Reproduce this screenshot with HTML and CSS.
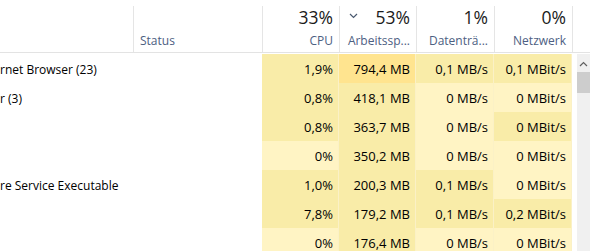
FILE: index.html
```html
<!DOCTYPE html>
<html lang="de">
<head>
<meta charset="utf-8">
<link rel="stylesheet" href="styles.css">
</head>
<body>
<div class="tm">
  <div class="grid">
    <div class="head">
      <div class="hc name"></div>
      <div class="hc status"><span class="lbl">Status</span></div>
      <div class="hc num"><span class="pct">33%</span><span class="lbl">CPU</span></div>
      <div class="hc num sorted">
        <svg class="chev" width="9" height="6" viewBox="0 0 9 6"><polyline points="1,1 4.5,4.5 8,1" fill="none" stroke="#4a5a70" stroke-width="1.2"/></svg>
        <span class="pct">53%</span><span class="lbl">Arbeitssp...</span></div>
      <div class="hc num"><span class="pct">1%</span><span class="lbl">Datenträ...</span></div>
      <div class="hc num"><span class="pct">0%</span><span class="lbl">Netzwerk</span></div>
      <div class="hc rest"></div>
    </div>
    <div class="body">
      <div class="rows">
        <div class="row"><div class="c name">rnet Browser (23)</div><div class="c"></div><div class="c v h1">1,9%</div><div class="c v h2">794,4 MB</div><div class="c v h1">0,1 MB/s</div><div class="c v h1">0,1 MBit/s</div></div>
        <div class="row"><div class="c name">r (3)</div><div class="c"></div><div class="c v h1">0,8%</div><div class="c v h1">418,1 MB</div><div class="c v h0">0 MB/s</div><div class="c v h0">0 MBit/s</div></div>
        <div class="row"><div class="c name"></div><div class="c"></div><div class="c v h1">0,8%</div><div class="c v h1">363,7 MB</div><div class="c v h0">0 MB/s</div><div class="c v h1">0 MBit/s</div></div>
        <div class="row"><div class="c name"></div><div class="c"></div><div class="c v h0">0%</div><div class="c v h1">350,2 MB</div><div class="c v h0">0 MB/s</div><div class="c v h0">0 MBit/s</div></div>
        <div class="row"><div class="c name">re Service Executable</div><div class="c"></div><div class="c v h1">1,0%</div><div class="c v h1">200,3 MB</div><div class="c v h1">0,1 MB/s</div><div class="c v h0">0 MBit/s</div></div>
        <div class="row"><div class="c name"></div><div class="c"></div><div class="c v h1">7,8%</div><div class="c v h1">179,2 MB</div><div class="c v h1">0,1 MB/s</div><div class="c v h1">0,2 MBit/s</div></div>
        <div class="row"><div class="c name"></div><div class="c"></div><div class="c v h0">0%</div><div class="c v h1">176,4 MB</div><div class="c v h0">0 MB/s</div><div class="c v h0">0 MBit/s</div></div>
      </div>
      <div class="scroll">
        <div class="sb-up"><svg width="9" height="6" viewBox="0 0 9 6"><polyline points="1,5 4.5,1.5 8,5" fill="none" stroke="#606060" stroke-width="1.2"/></svg></div>
        <div class="thumb"></div>
      </div>
    </div>
  </div>
</div>
</body>
</html>
```
FILE: styles.css
```css
* { box-sizing: border-box; }
html, body { margin: 0; padding: 0; background: #fff; }
body {
  width: 590px;
  height: 251px;
  overflow: hidden;
  font-family: "Open Sans", "Noto Sans", sans-serif;
  font-size: 12px;
  color: #000;
}
.tm { width: 590px; height: 251px; overflow: hidden; }
.head {
  display: grid;
  grid-template-columns: 133px 129px 77px 77px 78px 78px 1fr;
  height: 53px;
  border-bottom: 1px solid #e3e3e3;
}
.hc {
  position: relative;
  display: flex;
  flex-direction: column;
  justify-content: flex-end;
  padding: 0 6px 3px 6px;
  border-left: 1px solid #e5e5e5;
  margin-top: 6px;
}
.hc.name { border-left: none; }
.hc.num { align-items: flex-end; }
.pct {
  font-size: 17.5px;
  line-height: 22px;
  color: #1b1b1b;
  margin-bottom: 5px;
}
.lbl {
  font-size: 12px;
  line-height: 16px;
  color: #4d6082;
}
.chev { position: absolute; left: 9px; top: 7px; }
.body { display: flex; margin-top: 1px; }
.rows { width: 572px; }
.row {
  display: grid;
  grid-template-columns: 133px 129px 77px 77px 78px 78px;
  height: 29px;
}
.c {
  display: flex;
  align-items: center;
  padding: 1px 5px 0 6px;
  white-space: nowrap;
  font-size: 13px;
}
.c.name { padding-left: 0; font-size: 12px; }
.c.v { justify-content: flex-end; border-right: 1px solid #fbf1c6; }
.h0 { background: #fff4c4; }
.h1 { background: #f9eca8; }
.h2 { background: #ffe48f; }
.scroll {
  margin-left: 5px;
  width: 13px;
  background: #f0f0f0;
  display: flex;
  flex-direction: column;
}
.sb-up { height: 18px; display: flex; align-items: center; justify-content: center; padding-top: 2px; }
.thumb { height: 21px; background: #cdcdcd; }
```
